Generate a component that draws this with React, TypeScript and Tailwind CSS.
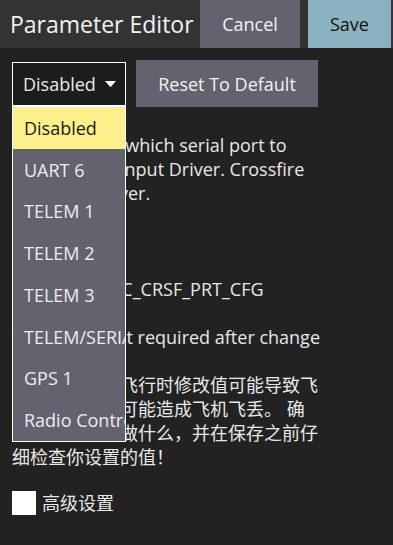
import React from "react";

const options = [
  "Disabled",
  "UART 6",
  "TELEM 1",
  "TELEM 2",
  "TELEM 3",
  "TELEM/SERIAL 4",
  "GPS 1",
  "Radio Controller",
];

export default function App() {
  return (
    <div className="relative h-[545px] w-[393px] overflow-hidden bg-[#222222] font-['Open_Sans','Noto_Sans_CJK_SC',sans-serif] text-[18px] leading-[24px] text-[#e8e8e8]">
      {/* Header */}
      <div className="flex h-[48px] items-stretch bg-[#333333] pr-[2px]">
        <div className="flex min-w-0 flex-1 items-center whitespace-nowrap pl-[10px] text-[23px] text-[#f2f2f2]">
          Parameter Editor
        </div>
        <div className="flex w-[100px] shrink-0 items-center justify-center bg-[#63626f] text-[#f2f2f2]">
          Cancel
        </div>
        <div className="w-[8px] shrink-0" />
        <div className="flex w-[83px] shrink-0 items-center justify-center bg-[#8bb3bf] text-[#111111]">
          Save
        </div>
      </div>

      {/* Body */}
      <div className="relative px-3 pt-3">
        <div className="flex items-center gap-[10px]">
          <div className="flex h-[44px] w-[114px] items-center border border-white bg-[#1c1c1c] pl-[10px]">
            <span>Disabled</span>
            <svg className="ml-[9px]" width="11" height="6" viewBox="0 0 11 6">
              <path d="M0 0 H11 L6.2 5.6 Q5.5 6.2 4.8 5.6 Z" fill="#f5f5f5" />
            </svg>
          </div>
          <div className="flex h-[47px] w-[182px] items-center justify-center bg-[#63626f] text-[#f2f2f2]">
            Reset To Default
          </div>
        </div>

        <div className="mt-[26px] w-[340px]">
          Configure on which serial port to
          <br />
          run CRSF RC Input Driver. Crossfire
          <br />
          RC (CRSF) driver.
        </div>

        <div className="mt-[72px]">Parameter: RC_CRSF_PRT_CFG</div>
        <div className="mt-[24px]">Vehicle reboot required after change</div>

        <div className="mt-[24px] w-[360px]">
          警告：飞机在飞行时修改值可能导致飞
          <br />
          行器不稳定，可能造成飞机飞丢。 确
          <br />
          保你知道你在做什么，并在保存之前仔
          <br />
          细检查你设置的值！
        </div>

        <div className="mt-[22px] flex items-center gap-[6px]">
          <div className="h-[24px] w-[24px] bg-white" />
          <span>高级设置</span>
        </div>

        {/* Dropdown list overlay */}
        <div className="absolute left-3 top-[58px] w-[114px] overflow-hidden border border-white bg-[#63626f]">
          {options.map((o, i) => (
            <div
              key={o}
              className={
                i === 0
                  ? "flex h-[41.75px] items-center whitespace-nowrap bg-[#fdf08c] pl-[11px] text-[#1a1a1a]"
                  : "flex h-[41.75px] items-center whitespace-nowrap pl-[11px] text-[#ececf2]"
              }
            >
              {o}
            </div>
          ))}
        </div>
      </div>
    </div>
  );
}
